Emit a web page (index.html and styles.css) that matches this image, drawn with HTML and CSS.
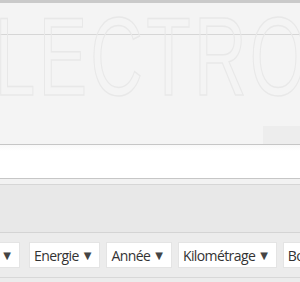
FILE: index.html
```html
<!DOCTYPE html>
<html lang="fr">
<head>
  <meta charset="UTF-8" />
  <meta name="viewport" content="width=device-width, initial-scale=1.0"/>
  <title>Recherche</title>
  <link rel="stylesheet" href="styles.css">
</head>
<body>

  <div class="hero">
    <div class="watermark">ELECTRO</div>
    <div class="hero-top"></div>
    <div class="hero-body">
      <div class="hero-tab"></div>
    </div>
  </div>

  <div class="search-band"></div>
  <div class="search-foot"></div>

  <div class="spacer"></div>

  <div class="filters">
    <div class="filter-row">
      <button class="filter first">Modèle <span class="arrow">▼</span></button>
      <button class="filter">Energie <span class="arrow">▼</span></button>
      <button class="filter">Année <span class="arrow">▼</span></button>
      <button class="filter">Kilométrage <span class="arrow">▼</span></button>
      <button class="filter">Boîte <span class="arrow">▼</span></button>
    </div>
  </div>

  <div class="bottom"></div>

</body>
</html>
```

FILE: styles.css
```css
body {
  margin: 0;
  font-family: 'Open Sans', sans-serif;
  background-color: #ececec;
  overflow: hidden;
}

.hero {
  position: relative;
  overflow: hidden;
  background-color: #f4f4f4;
  border-top: 3px solid #cacaca;
}

.watermark {
  position: absolute;
  left: -57px;
  top: -11px;
  font-family: 'Liberation Sans', sans-serif;
  font-size: 112px;
  letter-spacing: 5px;
  color: transparent;
  -webkit-text-stroke: 1.5px #e8e8e8;
  transform: scaleX(0.65);
  transform-origin: left top;
  white-space: nowrap;
}

.hero-top {
  height: 31px;
  border-bottom: 1px solid #d6d6d6;
}

.hero-body {
  height: 109px;
  display: flex;
  justify-content: flex-end;
  align-items: flex-end;
}

.hero-tab {
  width: 37px;
  height: 18px;
  background-color: #ededed;
}

.search-band {
  height: 33px;
  background: linear-gradient(#f9f9f9, #ffffff 6px);
  border-top: 1px solid #c6c6c6;
  border-bottom: 1px solid #c6c6c6;
}

.search-foot {
  height: 5px;
  background-color: #f2f2f2;
  border-bottom: 1px solid #d6d6d6;
}

.spacer {
  height: 47px;
  background-color: #e8e8e8;
  border-bottom: 1px solid #d4d4d4;
}

.filters {
  height: 44px;
  background-color: #ececec;
  border-bottom: 1px solid #d8d8d8;
  overflow: hidden;
}

.filter-row {
  display: flex;
  gap: 6px;
  margin-top: 9px;
  margin-left: -60px;
}

.filter {
  flex: none;
  display: flex;
  align-items: center;
  gap: 5px;
  height: 26px;
  margin: 0;
  padding: 0 8px 0 4px;
  background-color: #ffffff;
  border: 1px solid #e4e4e4;
  border-radius: 0;
  font-family: 'Open Sans', sans-serif;
  font-size: 14px;
  letter-spacing: -0.6px;
  color: #333333;
  white-space: nowrap;
}

.filter.first {
  width: 80px;
  margin-right: 3px;
  justify-content: flex-end;
}

.arrow {
  font-family: 'DejaVu Sans', sans-serif;
  font-size: 10px;
  letter-spacing: 0;
  color: #444444;
}

.bottom {
  height: 10px;
  background-color: #ececec;
}
```
